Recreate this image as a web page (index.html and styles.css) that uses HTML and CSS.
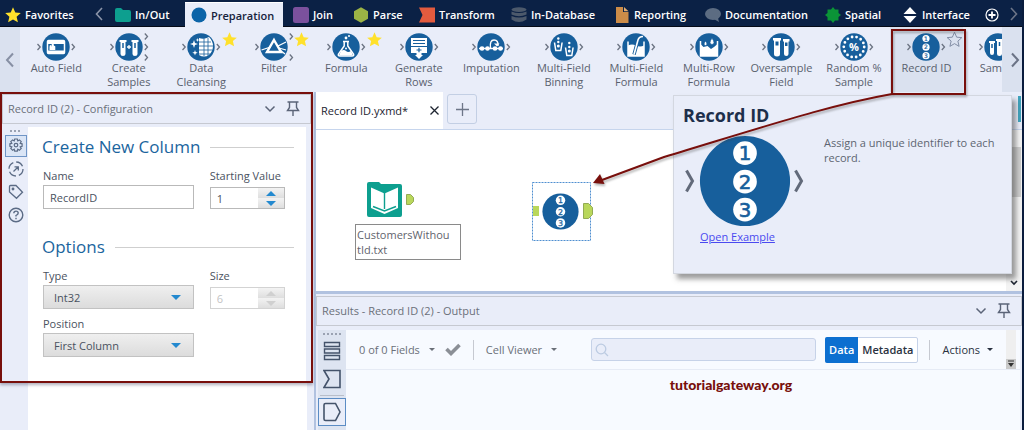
FILE: index.html
```html
<!DOCTYPE html>
<html lang="en">
<head>
    <meta charset="UTF-8">
    <meta name="viewport" content="width=device-width, initial-scale=1.0">
    <title>Record ID.yxmd</title>
    <link rel="stylesheet" href="styles.css">
</head>
<body>
    <!-- Shared shapes -->
    <svg class="defs" width="0" height="0" aria-hidden="true">
        <symbol id="disc" viewBox="-22 -14 44 28">
            <circle r="13.7" fill="#175f9c"/>
            <path d="M-18.500-3l2.700 3-2.700 3M15.800-3l2.700 3-2.700 3" fill="none" stroke="#6b7382" stroke-width="1.3"/>
        </symbol>
        <symbol id="star" viewBox="0 0 16 16">
            <path d="M8 .3l2.300 5.200 5.500.5-4.200 3.700 1.300 5.600L8 12.400l-4.900 2.900 1.300-5.600L.2 6l5.500-.5z"/>
        </symbol>
        <symbol id="pin" viewBox="0 0 14 16">
            <path d="M1.500 1h11M3.500 1v5.500L1.500 9.500h11l-2-3V1M7 9.500V15" fill="none" stroke="#5b6478" stroke-width="1.400"/>
        </symbol>
        <symbol id="down" viewBox="0 0 12 8">
            <path d="M1.500 1.500L6 6l4.500-4.500" fill="none" stroke="#5b6478" stroke-width="1.500"/>
        </symbol>
    </svg>

    <nav class="categories">
        <a class="category favorites" href="#"><svg width="16" height="16" fill="#ffe12b"><use href="#star"/></svg>Favorites</a>
        <button class="scroll-tabs" aria-label="Previous"><svg width="8" height="14" viewBox="0 0 8 14"><path d="M7 1L1.500 7 7 13" fill="none" stroke="#8b94a8" stroke-width="1.600"/></svg></button>
        <div class="category-list">
            <a class="category" href="#"><svg width="16" height="16" viewBox="0 0 16 16"><path d="M0 3q0-2 2-2h4l2 2h6q2 0 2 2v8q0 2-2 2H2q-2 0-2-2z" fill="#0d9f8f"/></svg>In/Out</a>
            <a class="category active" href="#"><svg width="16" height="16" viewBox="0 0 16 16"><circle cx="8" cy="8" r="7.500" fill="#0c64a8"/></svg>Preparation</a>
            <a class="category" href="#"><svg width="16" height="16" viewBox="0 0 16 16"><rect width="16" height="16" rx="2.500" fill="#7b519d"/></svg>Join</a>
            <a class="category" href="#"><svg width="16" height="16" viewBox="0 0 16 16"><path d="M8 .3l7 3.900v7.600l-7 3.900-7-3.900V4.200z" fill="#9bb345"/></svg>Parse</a>
            <a class="category" href="#"><svg width="16" height="16" viewBox="0 0 16 16"><path d="M0 .5h16v15H0L3.500 8z" fill="#e35b3e"/></svg>Transform</a>
            <a class="category" href="#"><svg width="16" height="16" viewBox="0 0 16 16" fill="#4c596b"><ellipse cx="8" cy="2.600" rx="7.500" ry="2.300"/><path d="M.5 4.500q7.500 3 15 0v3q-7.500 3.400-15 0zM.5 9q7.500 3 15 0v3.500q-7.500 5-15 0z"/></svg>In-Database</a>
            <a class="category" href="#"><svg width="16" height="16" viewBox="0 0 16 16"><path d="M2 0h7v5h5.500v11H2z" fill="#cc8c48"/><path d="M10 0l4.500 4.300H10z" fill="#e0ac72"/></svg>Reporting</a>
            <a class="category" href="#"><svg width="16" height="16" viewBox="0 0 16 16"><ellipse cx="8" cy="7" rx="8" ry="6" fill="#5c6c82"/><path d="M7 11h6l1 4z" fill="#5c6c82"/></svg>Documentation</a>
            <a class="category" href="#"><svg width="16" height="16" viewBox="0 0 16 16"><path d="M8 0l2 2.500 3.500 0V6L16 8l-2.500 2v3.500H10L8 16l-2-2.500H2.500V10L0 8l2.500-2V2.500H6z" fill="#0b9437"/></svg>Spatial</a>
            <a class="category" href="#"><svg width="16" height="16" viewBox="0 0 16 16"><path d="M8 0l6.500 7h-13zM8 16l6.500-7h-13z" fill="#fff"/></svg>Interface</a>
        </div>
        <button class="add-category" aria-label="Add category"><svg width="14" height="14" viewBox="0 0 14 14" fill="none" stroke="#fff"><circle cx="7" cy="7" r="6" stroke-width="1.200"/><path d="M7 3.500v7M3.500 7h7" stroke-width="1.800"/></svg></button>
        <button class="scroll-tabs" aria-label="Next"><svg width="8" height="14" viewBox="0 0 8 14"><path d="M1 1l5.500 6L1 13" fill="none" stroke="#6d7588" stroke-width="1.600"/></svg></button>
    </nav>

    <div class="ribbon">
        <button class="scroll-tools" aria-label="Previous tools"><svg width="9" height="16" viewBox="0 0 9 16"><path d="M8 1.500L2 8l6 6.500" fill="none" stroke="#8790a4" stroke-width="2"/></svg></button>
        <div class="tools">
            <a class="tool" href="#">
                <svg width="44" height="28" viewBox="-22 -14 44 28"><use href="#disc" x="-22" y="-14" width="44" height="28"/><rect x="-8.500" y="-6.500" width="17" height="13" rx="1" fill="none" stroke="#fff" stroke-width="1.500"/><path d="M-8.500-6h17v3h-17zM-8.500 3.500h17v3h-17z" fill="#fff"/><path d="M-6.500 3v-3q0-2 1-2t1 2q0-4 1.200-4t1.300 3q1.300-1 1.300 1v3z" fill="#fff"/></svg>
                <span>Auto Field</span>
            </a>
            <a class="tool" href="#">
                <svg width="44" height="28" viewBox="-22 -14 44 28"><use href="#disc" x="-22" y="-14" width="44" height="28"/><path d="M15.800-13.500l2.700 3-2.700 3M15.800 7.500l2.700 3-2.700 3" fill="none" stroke="#6b7382" stroke-width="1.300"/><path d="M-9.500-7h7v2h-1V7q0 2-2.500 2t-2.500-2V-5h-1zM2.500-7h7v2h-1V7q0 2-2.500 2T3.500 7V-5h-1z" fill="#fff"/><path d="M-6-4v5M6-4v5" stroke="#175f9c" stroke-width="1.500"/><path d="M-2 0h4M0-2v4" stroke="#fff" stroke-width="1.300"/></svg>
                <span>Create Samples</span>
            </a>
            <a class="tool" href="#">
                <svg width="44" height="28" viewBox="-22 -14 44 28"><use href="#disc" x="-22" y="-14" width="44" height="28"/><path d="M-2-9q5 2 10-1 4 4 4 9t-4 9q-5 3-10 0z" fill="#fff"/><path d="M-2-5h12M-2-1h14M-2 3h13M-2 7h11M3-9V9M7-9V9" stroke="#175f9c" stroke-width=".8"/><path d="M-7-7l1 3 3 1-3 1-1 3-1-3-3-1 3-1zM-6 3l.7 2 2 .7-2 .7-.7 2-.7-2-2-.7 2-.7zM-3.500-9l.5 1.500 1.500.5-1.500.5-.5 1.500-.5-1.500-1.500-.5 1.500-.5z" fill="#fff"/></svg>
                <span>Data Cleansing</span>
                <svg class="fav" width="15" height="15"><use href="#star"/></svg>
            </a>
            <a class="tool" href="#">
                <svg width="44" height="28" viewBox="-22 -14 44 28"><circle r="13.700" fill="#175f9c"/><path d="M-18.500-3l2.700 3-2.700 3M15.800-13.500l2.700 3-2.700 3M15.800 7.500l2.700 3-2.700 3" fill="none" stroke="#6b7382" stroke-width="1.300"/><path d="M0-7L7 5H-7z" fill="none" stroke="#fff" stroke-width="2.400"/><path d="M-12.500 3l9-3M4-1l8-4M5 1l7 2M6 3l5 4" stroke="#fff" stroke-width="1.300"/></svg>
                <span>Filter</span>
                <svg class="fav" width="15" height="15"><use href="#star"/></svg>
            </a>
            <a class="tool" href="#">
                <svg width="44" height="28" viewBox="-22 -14 44 28"><use href="#disc" x="-22" y="-14" width="44" height="28"/><path d="M-1.800-5v4L-7.500 7q-.8 2 1.500 2H6q2.300 0 1.500-2L1.800-1v-4" fill="none" stroke="#fff" stroke-width="1.500"/><path d="M-5 4q3-2 5 0t5 0l2 4.500H-7z" fill="#fff"/><path d="M-3-5.500h6" stroke="#fff" stroke-width="1.500"/><g fill="#fff"><circle cx="0" cy="-9" r="1.400"/><circle cx="3" cy="-11" r="1"/><circle cx="0" cy="1.500" r="1"/></g></svg>
                <span>Formula</span>
                <svg class="fav" width="15" height="15"><use href="#star"/></svg>
            </a>
            <a class="tool" href="#">
                <svg width="44" height="28" viewBox="-22 -14 44 28"><use href="#disc" x="-22" y="-14" width="44" height="28"/><path d="M-8-9H8v8H-8zM-8 0H8v6H2.500v2H4L0 12-4 8h1.500V6H-8z" fill="#fff"/><path d="M-6-6.500H6M-6-3.500H6M-2.500 3h5M0 .8v4.400" stroke="#175f9c" stroke-width="1.200"/></svg>
                <span>Generate Rows</span>
            </a>
            <a class="tool" href="#">
                <svg width="44" height="28" viewBox="-22 -14 44 28"><use href="#disc" x="-22" y="-14" width="44" height="28"/><g fill="#fff"><circle cx="-9" cy="1.500" r="2.300"/><circle cx="-3.500" cy="1.500" r="2.300"/><circle cx="4" cy="1.500" r="2.300"/><circle cx="9.500" cy="1.500" r="2.300"/></g><path d="M-12 1.500h24M-.500 1q-1-8 3.500-8t4 6" fill="none" stroke="#fff" stroke-width="1.400"/><path d="M3-3.500h5.500l-2.500 3z" fill="#fff"/></svg>
                <span>Imputation</span>
            </a>
            <a class="tool" href="#">
                <svg width="44" height="28" viewBox="-22 -14 44 28"><use href="#disc" x="-22" y="-14" width="44" height="28"/><path d="M-9.500-4.500l1.300 8h5l1.300-8M1.500.5l1.300 8h5l1.300-8" fill="none" stroke="#fff" stroke-width="1.500"/><g fill="#fff"><circle cx="-5.700" cy="-8.500" r="1.200"/><circle cx="-5.700" cy="-5" r="1.200"/><circle cx="-5.700" cy="-1" r="1.500"/><circle cx="5.300" cy="-4" r="1.200"/><circle cx="5.300" cy="0" r="1.200"/><circle cx="5.300" cy="4" r="1.500"/></g></svg>
                <span>Multi-Field Binning</span>
            </a>
            <a class="tool" href="#">
                <svg width="44" height="28" viewBox="-22 -14 44 28"><use href="#disc" x="-22" y="-14" width="44" height="28"/><path d="M-8-5.500V9H8V-5.500" fill="none" stroke="#fff" stroke-width="1.500"/><path d="M-8-1.500q4-2 8 0t8 0V9H-8z" fill="#fff"/><path d="M-2 7.500L2-7q1-3.500 5-3.500" fill="none" stroke="#175f9c" stroke-width="3.400"/><path d="M-2 7.500L2-7q1-3.500 5-3.500" fill="none" stroke="#fff" stroke-width="1.600"/></svg>
                <span>Multi-Field Formula</span>
            </a>
            <a class="tool" href="#">
                <svg width="44" height="28" viewBox="-22 -14 44 28"><use href="#disc" x="-22" y="-14" width="44" height="28"/><path d="M-8.500-6V9h17V-6" fill="none" stroke="#fff" stroke-width="1.500"/><path d="M-8.500-3l3 3 4-1L2 2l3-2 3.500-3V9h-17z" fill="#fff"/><path d="M-3.500-6q-3 4 0 4.500 3-.5 0-4.500zM3-9q-4 6 0 6.500Q7-3 3-9z" fill="#fff" stroke="#175f9c" stroke-width=".7"/></svg>
                <span>Multi-Row Formula</span>
            </a>
            <a class="tool" href="#">
                <svg width="44" height="28" viewBox="-22 -14 44 28"><use href="#disc" x="-22" y="-14" width="44" height="28"/><path d="M-8-9h8v2.500h-1V7q0 2.500-3 2.500T-7 7V-6.500h-1zM2-8h6.500v2.500h-1V7q0 2-2.200 2T3 7V-5.500H2z" fill="#fff"/><path d="M-5.500-5.500h3v4h-3zM4-4.500h2.500v3.500H4z" fill="#175f9c"/></svg>
                <span>Oversample Field</span>
            </a>
            <a class="tool" href="#">
                <svg width="44" height="28" viewBox="-22 -14 44 28"><use href="#disc" x="-22" y="-14" width="44" height="28"/><circle r="10.200" fill="none" stroke="#fff" stroke-width="2.800" stroke-dasharray="0 4.578" stroke-linecap="round"/><text class="percent" y="4">%</text></svg>
                <span>Random % Sample</span>
            </a>
            <a class="tool selected" href="#">
                <svg width="44" height="28" viewBox="-22 -14 44 28"><use href="#disc" x="-22" y="-14" width="44" height="28"/><g fill="#fff"><circle cy="-8.500" r="3.600"/><circle cy="0.200" r="3.600"/><circle cy="8.700" r="3.600"/></g><g class="digits"><text y="-6.300">1</text><text y="2.400">2</text><text y="10.900">3</text></g></svg>
                <span>Record ID</span>
                <svg class="fav outline" width="15" height="15"><use href="#star"/></svg>
            </a>
            <a class="tool" href="#">
                <svg width="44" height="28" viewBox="-22 -14 44 28"><use href="#disc" x="-22" y="-14" width="44" height="28"/><path d="M-9-6h6v2h-1V6q0 2-2 2t-2-2V-4h-1zM-2-8h7v2H4V7q0 2-2.500 2T-1 7V-6h-1z" fill="#fff"/><path d="M-6-3v4M1.500-5v4" stroke="#175f9c" stroke-width="1.500"/></svg>
                <span>Sam</span>
            </a>
        </div>
        <button class="scroll-tools" aria-label="Next tools"><svg width="9" height="16" viewBox="0 0 9 16"><path d="M1 1.500L7 8l-6 6.500" fill="none" stroke="#6b7386" stroke-width="2"/></svg></button>
    </div>

    <div class="workspace">
        <aside class="left-column">
            <section class="config">
                <header class="panel-header">
                    <h2>Record ID (2) - Configuration</h2>
                    <button aria-label="Panel menu"><svg width="12" height="8"><use href="#down"/></svg></button>
                    <button aria-label="Pin panel"><svg width="14" height="16"><use href="#pin"/></svg></button>
                </header>
                <div class="config-body">
                    <div class="config-tabs">
                        <i class="grip"></i>
                        <button class="current" aria-label="Settings"><svg width="16" height="16" viewBox="0 0 16 16" fill="none" stroke="#5b6b85" stroke-width="1.200"><path d="M6.700 1h2.600l.5 1.900 1.600-1 1.800 1.800-1 1.600 1.900.5v2.600l-1.900.5 1 1.600-1.800 1.800-1.600-1-.5 1.900H6.700l-.5-1.900-1.600 1-1.800-1.800 1-1.600L1.900 8.400V5.800l1.900-.5-1-1.600 1.800-1.800 1.600 1z"/><circle cx="8" cy="7.100" r="1.800"/></svg></button>
                        <button aria-label="Open"><svg width="16" height="16" viewBox="0 0 16 16" fill="none" stroke="#5b6b85" stroke-width="1.300"><circle cx="8" cy="8" r="7" stroke-dasharray="8 3"/><path d="M5.500 10.500l4.500-4.500M6.500 5.800h3.800v3.800"/></svg></button>
                        <button aria-label="Annotation"><svg width="16" height="16" viewBox="0 0 16 16" fill="none" stroke="#5b6b85" stroke-width="1.300"><path d="M1.500 2.500q0-1 1-1H8l6.500 6.800-6 6L1.500 8z"/><circle cx="5" cy="5" r=".8"/></svg></button>
                        <button aria-label="Help"><svg width="16" height="16" viewBox="0 0 16 16" fill="none" stroke="#5b6b85" stroke-width="1.400"><circle cx="8" cy="8" r="6.800"/><path d="M5.800 6.300q0-2.200 2.200-2.200t2.200 1.900Q10.200 7.300 8 8.500v1M8 10.800v1.500"/></svg></button>
                    </div>
                    <form class="config-form">
                        <h3>Create New Column</h3>
                        <div class="fields">
                            <div class="field">
                                <label for="name">Name</label>
                                <input type="text" id="name" value="RecordID">
                            </div>
                            <div class="field">
                                <label for="start">Starting Value</label>
                                <div class="spinner">
                                    <input type="number" id="start" value="1">
                                    <div class="steps"><button type="button" aria-label="Increase"></button><button type="button" aria-label="Decrease"></button></div>
                                </div>
                            </div>
                        </div>
                        <h3>Options</h3>
                        <div class="fields">
                            <div class="field">
                                <label for="type">Type</label>
                                <div class="dropdown"><select id="type"><option>Int32</option></select></div>
                            </div>
                            <div class="field">
                                <label for="size">Size</label>
                                <div class="spinner disabled">
                                    <input type="number" id="size" value="6" disabled>
                                    <div class="steps"><button type="button" aria-label="Increase" disabled></button><button type="button" aria-label="Decrease" disabled></button></div>
                                </div>
                            </div>
                            <div class="field">
                                <label for="position">Position</label>
                                <div class="dropdown"><select id="position"><option>First Column</option></select></div>
                            </div>
                        </div>
                    </form>
                </div>
            </section>
            <div class="left-rest"></div>
        </aside>

        <main class="main-column">
            <div class="documents">
                <div class="document">
                    <span>Record ID.yxmd*</span>
                    <button aria-label="Close"><svg width="9" height="9" viewBox="0 0 9 9"><path d="M.5.5l8 8M8.500.5l-8 8" stroke="#1d2430" stroke-width="1.300"/></svg></button>
                </div>
                <button class="new-document" aria-label="New workflow"><svg width="13" height="13" viewBox="0 0 13 13"><path d="M6.500 0v13M0 6.500h13" stroke="#6d7688" stroke-width="1.300"/></svg></button>
                <button class="run" aria-label="Run"></button>
            </div>

            <div class="canvas">
                <div class="node input-node">
                    <svg width="48" height="36" viewBox="0 0 48 36"><path d="M0 2q0-2 2-2h10l2 2h19q2 0 2 2v29q0 2-2 2H2q-2 0-2-2z" fill="#0d9f8f"/><path d="M4 5.500l13.500 6L31 5.500V26l-13.500 6L4 26z" fill="#fff"/><path d="M17.500 11v16M6 24.500l11.500 4.500L29 24.500" fill="none" stroke="#0d9f8f" stroke-width="1.400"/><path d="M39.500 12.500h4l3 3v4l-3 3h-4z" fill="#b9d75b" stroke="#93ab55"/></svg>
                </div>
                <div class="annotation">CustomersWithou<br>tId.txt</div>
                <div class="node record-node">
                    <svg width="62" height="59" viewBox="0 0 62 59"><rect x=".5" y=".5" width="58" height="58" fill="none" stroke="#4f8fd0" stroke-dasharray="2 1"/><path d="M1 24h6v10H1z" fill="#b9d75b"/><path d="M51.500 21.500h5l4 4v7l-4 4h-5z" fill="#b9d75b" stroke="#93ab55"/><g transform="translate(28.500 29.500) scale(1.320)"><circle r="13.700" fill="#175f9c"/><g fill="#fff"><circle cy="-8.500" r="3.600"/><circle cy="0.200" r="3.600"/><circle cy="8.700" r="3.600"/></g><g class="digits"><text y="-6.300">1</text><text y="2.400">2</text><text y="10.900">3</text></g></g></svg>
                </div>
                <div class="canvas-scroll"><i></i><svg width="8" height="6" viewBox="0 0 8 6"><path d="M1 1l3 3 3-3" fill="none" stroke="#1d2430" stroke-width="1.600"/></svg></div>
            </div>

            <section class="results">
                <header class="panel-header">
                    <h2>Results - Record ID (2) - Output</h2>
                    <button aria-label="Panel menu"><svg width="12" height="8"><use href="#down"/></svg></button>
                    <button aria-label="Pin panel"><svg width="14" height="16"><use href="#pin"/></svg></button>
                </header>
                <div class="results-body">
                    <div class="results-tabs">
                        <i class="grip"></i>
                        <button aria-label="Messages"><svg width="18" height="20" viewBox="0 0 18 20" fill="none" stroke="#44536b" stroke-width="1.400"><path d="M1.500 1.500h15v4h-15zM1.500 8h15v4h-15zM1.500 14.500h15v4h-15z"/></svg></button>
                        <button aria-label="Input"><svg width="18" height="20" viewBox="0 0 18 20" fill="none" stroke="#44536b" stroke-width="1.600"><path d="M1 1.500h16v17H1L6 10z"/></svg></button>
                        <hr>
                        <button class="current" aria-label="Output"><svg width="18" height="20" viewBox="0 0 18 20" fill="none" stroke="#44536b" stroke-width="1.600"><path d="M1 3q0-1.500 1.500-1.500h10L17 10l-4.500 8.500h-10Q1 18.500 1 17z"/></svg></button>
                    </div>
                    <div class="results-content">
                        <div class="results-toolbar">
                            <button class="menu">0 of 0 Fields</button>
                            <button class="apply" aria-label="Apply"><svg width="16" height="13" viewBox="0 0 16 13"><path d="M1.500 6l4.500 4.500L14.500 2" fill="none" stroke="#8b8f96" stroke-width="3.600"/></svg></button>
                            <button class="menu viewer">Cell Viewer</button>
                            <label class="search">
                                <svg width="14" height="14" viewBox="0 0 14 14" fill="none" stroke="#bccbe2" stroke-width="1.300"><circle cx="6" cy="6" r="4.800"/><path d="M9.500 9.500L13 13"/></svg>
                                <input type="text" aria-label="Search">
                            </label>
                            <div class="switch"><button class="on">Data</button><button>Metadata</button></div>
                            <button class="menu actions">Actions</button>
                            <div class="mini-scroll"><svg width="10" height="10" viewBox="0 0 10 10"><path d="M0 0h10v10H0z" fill="#c9c9c9"/><path d="M2 2h6" stroke="#333" stroke-width="1"/><path d="M2 4h6L5 8z" fill="#333"/></svg></div>
                        </div>
                        <p class="watermark">tutorialgateway.org</p>
                    </div>
                </div>
            </section>
        </main>
    </div>

    <!-- Tool help popup -->
    <div class="popup">
        <h1>Record ID</h1>
        <div class="popup-body">
            <figure>
                <svg width="120" height="92" viewBox="0 0 120 92"><g transform="translate(60 46) scale(3.290)"><circle r="13.700" fill="#175f9c"/><g fill="#fff"><circle cy="-8.500" r="3.600"/><circle cy="0.200" r="3.600"/><circle cy="8.700" r="3.600"/></g><g class="digits"><text y="-6.300">1</text><text y="2.400">2</text><text y="10.900">3</text></g></g><path d="M1.500 35.500l6 10.500-6 10.500M110.500 35.500l6 10.500-6 10.500" fill="none" stroke="#626a7a" stroke-width="3"/></svg>
                <a href="#">Open Example</a>
            </figure>
            <p>Assign a unique identifier to each record.</p>
        </div>
    </div>

    <svg class="callout" width="380" height="166" viewBox="588 27 380 166">
        <g fill="none" stroke="#780f0c" stroke-width="2">
            <path d="M892 30h73v64h-73z"/>
            <path d="M892 94C830 105 770 125 664 157L602 180"/>
        </g>
        <path d="M593 183l7-9 4.500 10z" fill="#780f0c"/>
    </svg>
</body>
</html>
```
FILE: styles.css
```css
* {
    margin: 0;
    padding: 0;
    box-sizing: border-box;
}

body {
    position: relative;
    display: flex;
    flex-direction: column;
    height: 100vh;
    overflow: hidden;
    font-family: "Open Sans", "Noto Sans", sans-serif;
    font-size: 11px;
    color: #4a5260;
    background: #e9edf9;
    border-right: 2px solid #0a1c3d;
}

button,
input,
select {
    font: inherit;
    color: inherit;
    background: none;
    border: 0;
    border-radius: 0;
    outline: 0;
}

a {
    color: inherit;
    text-decoration: none;
}

svg {
    display: block;
    flex: none;
}

.defs {
    position: absolute;
}

.digits {
    fill: #175f9c;
    font: 6px "DejaVu Sans", sans-serif;
    stroke: #175f9c;
    stroke-width: 0.2px;
    text-anchor: middle;
}

.percent {
    fill: #fff;
    font: 700 11px "Open Sans", sans-serif;
    text-anchor: middle;
}

/* Categories */
.categories {
    flex: none;
    display: flex;
    height: 27px;
    margin-right: -2px;
    background: #0b2145;
    border-bottom: 1px solid #050b18;
}

.category {
    display: flex;
    align-items: center;
    gap: 4px;
    padding: 3px 0 0 10px;
    color: #fff;
    font-weight: 600;
    white-space: nowrap;
}

.favorites {
    flex: 0 0 92px;
    padding-left: 5px;
}

.scroll-tabs {
    flex: 0 0 13px;
    display: flex;
    align-items: center;
    justify-content: center;
    padding-top: 2px;
}

.category-list {
    flex: 1;
    display: grid;
    grid-template-columns: 80fr 98fr 60fr 66fr 92fr 103fr 91fr 120fr 77fr 83fr;
}

.category.active {
    margin: 2px 0 -1px;
    padding: 0 0 0 6px;
    color: #16233c;
    background: #e9edf9;
    border-top: 1px solid #fff;
}

.add-category {
    flex: 0 0 32px;
    padding: 3px 0 0 10px;
}

.add-category + .scroll-tabs {
    margin-right: 4px;
}

/* Tools */
.ribbon {
    flex: none;
    display: flex;
    height: 65px;
}

.scroll-tools {
    flex: 0 0 20px;
    display: flex;
    align-items: center;
    justify-content: center;
    padding-right: 2px;
    background: #dae1ef;
}

.tools + .scroll-tools {
    padding: 0 0 0 6px;
}

.tools {
    flex: 1;
    display: flex;
    overflow: hidden;
}

.tool {
    position: relative;
    flex: 0 0 calc(100% / 13.54);
    display: flex;
    flex-direction: column;
    align-items: center;
    padding-top: 6px;
    line-height: 14px;
    text-align: center;
    color: #59616e;
}

.tool span {
    width: 64px;
}

/* the last tool runs under the scroll button */
.tool:last-child {
    flex: 1 0 0;
    align-items: flex-start;
    padding-left: 13px;
    overflow: hidden;
}

.tool:last-child span {
    width: auto;
    padding-left: 4px;
}

.tool.selected {
    background: #dae1ef;
}

.fav {
    position: absolute;
    top: 5px;
    right: 1px;
    fill: #ffe12b;
}

.fav.outline {
    overflow: visible;
    fill: none;
    stroke: #7c87a0;
    stroke-width: 1px;
}

/* Workspace */
.workspace {
    flex: 1;
    display: flex;
    min-height: 0;
}

.left-column {
    flex: 0 0 314px;
    display: flex;
    flex-direction: column;
}

.config {
    border: 2px solid #780f0c;
    margin-right: 1px;
    box-shadow: 0 2px 3px rgba(60, 60, 90, 0.4);
    z-index: 1;
}

.panel-header {
    display: flex;
    align-items: center;
    gap: 10px;
    height: 30px;
    padding: 0 10px 1px 5px;
    border: 1px solid #c6c9d1;
}

.panel-header h2 {
    flex: 1;
    font-size: 11px;
    font-weight: 400;
    color: #6b7079;
}

.config-body {
    display: flex;
    padding: 3px 5px 0 0;
}

.config-tabs {
    flex: 0 0 26px;
    display: flex;
    flex-direction: column;
    align-items: center;
    gap: 1px;
    padding-left: 1px;
}

.grip {
    width: 11px;
    height: 2px;
    margin: 3px 0 2px;
    background: repeating-linear-gradient(90deg, #9aa2b2 0 2px, transparent 2px 4px);
}

.config-tabs button {
    display: flex;
    align-items: center;
    justify-content: center;
    width: 22px;
    height: 22px;
}

.config-tabs .current {
    background: #dae5f6;
    border: 1px solid #6f95c6;
}

.config-form {
    flex: 1;
    min-width: 0;
    padding: 8px 12px 24px 14px;
    background: #fff;
}

.config-form h3 {
    display: flex;
    align-items: center;
    gap: 10px;
    line-height: 24px;
    font-size: 17px;
    font-weight: 400;
    color: #1b659e;
    white-space: nowrap;
}

.config-form h3::after {
    content: "";
    flex: 1;
    height: 1px;
    background: #cfcfcf;
}

.fields {
    display: grid;
    grid-template-columns: minmax(0, 2fr) minmax(0, 1fr);
    gap: 6px 16px;
    padding: 8px 9px 0 1px;
}

.fields + h3 {
    margin-top: 26px;
}

.field label {
    display: block;
    line-height: 18px;
    white-space: nowrap;
}

.field > input {
    display: block;
    width: 100%;
    height: 24px;
    padding: 0 6px;
    border: 1px solid #b9b9b9;
}

.spinner {
    display: flex;
    height: 22px;
    margin-top: 2px;
    border: 1px solid #b9b9b9;
}

.spinner input {
    flex: 1;
    min-width: 0;
    padding: 0 6px;
    appearance: textfield;
}

.spinner input::-webkit-inner-spin-button {
    appearance: none;
}

.steps {
    flex: 0 0 26px;
    display: flex;
    flex-direction: column;
}

.steps button {
    flex: 1;
    display: flex;
    align-items: center;
    justify-content: center;
    background: linear-gradient(#f3f3f3, #dedede);
}

.steps button::before {
    content: "";
    border: 5px solid transparent;
    border-top: 0;
    border-bottom: 5px solid #2389cf;
}

.steps button + button::before {
    border-top: 5px solid #2389cf;
    border-bottom: 0;
}

.disabled {
    color: #c4c4c4;
    border-color: #d3d3d3;
}

.disabled button::before {
    border-bottom-color: #d0d0d0;
}

.disabled button + button::before {
    border-top-color: #d0d0d0;
}

.dropdown {
    position: relative;
}

.dropdown select {
    display: block;
    appearance: none;
    width: 100%;
    height: 24px;
    padding: 0 10px;
    background: linear-gradient(#efefef, #dcdcdc);
    border: 1px solid #c2c2c2;
}

.dropdown::after {
    content: "";
    position: absolute;
    top: 10px;
    right: 13px;
    border: 5px solid transparent;
    border-top-color: #2389cf;
    border-bottom: 0;
    pointer-events: none;
}

.left-rest {
    flex: 1;
    background: #fff;
    border: solid #e9edf9;
    border-width: 0 5px 0 28px;
    margin-right: 2px;
}

/* Workflow canvas */
.main-column {
    flex: 1;
    display: flex;
    flex-direction: column;
    min-width: 0;
    border-left: 2px solid #b1c2e0;
}

.documents {
    flex: 0 0 37px;
    display: flex;
    gap: 4px;
    border-bottom: 1px solid #c6d5ed;
}

.document {
    display: flex;
    align-items: center;
    justify-content: space-between;
    width: 127px;
    height: 37px;
    padding: 0 4px 0 5px;
    color: #1d2430;
    background: #fff;
    white-space: nowrap;
}

.new-document {
    display: flex;
    align-items: center;
    justify-content: center;
    width: 30px;
    height: 30px;
    margin-top: 2px;
    border: 1px solid #c3cfe4;
    border-radius: 3px;
}

.run {
    width: 3px;
    height: 26px;
    margin: 4px 1px 0 auto;
    background: #3fa3bd;
}

.canvas {
    position: relative;
    flex: 0 0 161px;
    background: #fff;
}

.node,
.annotation {
    position: absolute;
}

.input-node {
    top: 52px;
    left: 51px;
}

.annotation {
    top: 94px;
    left: 39px;
    width: 106px;
    height: 36px;
    padding: 2px 1px;
    font-size: 11px;
    line-height: 15px;
    color: #5f646d;
    border: 1px solid #8a8a8a;
}

.record-node {
    top: 52px;
    left: 216px;
}

.canvas-scroll {
    display: flex;
    flex-direction: column;
    align-items: center;
    justify-content: space-between;
    width: 16px;
    height: 100%;
    margin-left: auto;
    padding: 17px 0 5px;
    background: #f3f3f3;
}

.canvas-scroll i {
    width: 14px;
    height: 50px;
    background: #cdcdcd;
}

/* Results */
.results {
    flex: 1;
    display: flex;
    flex-direction: column;
    padding-top: 2px;
    border-top: 3px solid #b1c2e0;
}

.results-body {
    flex: 1;
    display: flex;
    padding: 4px 2px 0;
}

.results-tabs {
    flex: 0 0 28px;
    display: flex;
    flex-direction: column;
    align-items: center;
    background: #dde4f1;
}

.results-tabs .grip {
    width: 18px;
}

.results-tabs button {
    display: flex;
    align-items: center;
    justify-content: center;
    width: 28px;
    height: 28px;
}

.results-tabs hr {
    width: 24px;
    height: 1px;
    margin: 2px 0;
    border: 0;
    background: #b9bfca;
}

.results-tabs .current {
    border: 1px solid #5b8cc4;
    background: #e9edf9;
}

.results-content {
    flex: 1;
    background: #f7faff;
}

.results-toolbar {
    display: flex;
    align-items: center;
    height: 40px;
    padding-left: 13px;
    color: #6a6f78;
    border-bottom: 1px solid #e6ebf5;
}

.menu {
    display: flex;
    align-items: center;
    gap: 9px;
    white-space: nowrap;
}

.menu::after {
    content: "";
    border: 3px solid transparent;
    border-top-color: currentColor;
    border-bottom: 0;
}

.apply {
    margin: 0 12px 0 10px;
}

.viewer,
.actions {
    height: 20px;
    padding-left: 12px;
    border-left: 1px solid #c6c9d1;
}

.search {
    flex: 1;
    display: flex;
    align-items: center;
    height: 23px;
    margin: 0 9px 0 34px;
    padding-left: 3px;
    background: #e9edf9;
    border: 1px solid #c6d2e8;
    border-radius: 3px;
}

.search input {
    flex: 1;
    min-width: 0;
}

.switch {
    display: flex;
    height: 26px;
    margin-right: 11px;
    font-weight: 600;
    color: #2a3140;
    background: #fff;
    border: 1px solid #c6d2e8;
    border-radius: 2px;
}

.switch button {
    padding: 0 4px;
}

.switch .on {
    margin: -1px 0 -1px -1px;
    color: #fff;
    background: #0c6fd0;
    border-radius: 2px 0 0 2px;
}

.actions {
    gap: 7px;
    color: #2a3140;
}

.mini-scroll {
    display: flex;
    align-items: flex-end;
    align-self: stretch;
    margin: 0 4px 0 13px;
    background: #efefef;
}

.watermark {
    margin-top: 6px;
    padding-left: 96px;
    text-align: center;
    font: 900 14px/18px Lato, sans-serif;
    color: #780f0c;
}

/* Help popup */
.popup {
    position: absolute;
    top: 95px;
    right: 10px;
    width: 339px;
    height: 179px;
    padding: 7px 9px;
    background: #e9edf9;
    border: 1px solid #d3d7e0;
    box-shadow: 4px 5px 5px rgba(60, 60, 60, 0.5);
}

.popup h1 {
    line-height: 24px;
    font-size: 18px;
    font-weight: 700;
    color: #1d2f4b;
}

.popup-body {
    display: flex;
    gap: 19px;
}

.popup figure {
    flex: none;
    padding: 8px 0 0 2px;
}

.popup a {
    margin-left: 15px;
    line-height: 20px;
    color: #4a4af0;
    text-decoration: underline;
}

.popup-body p {
    padding-top: 8px;
    line-height: 15px;
    color: #5d6571;
}

.callout {
    position: absolute;
    top: 27px;
    right: 54px;
    filter: drop-shadow(1px 2px 1px rgba(60, 60, 60, 0.4));
    pointer-events: none;
}
```
